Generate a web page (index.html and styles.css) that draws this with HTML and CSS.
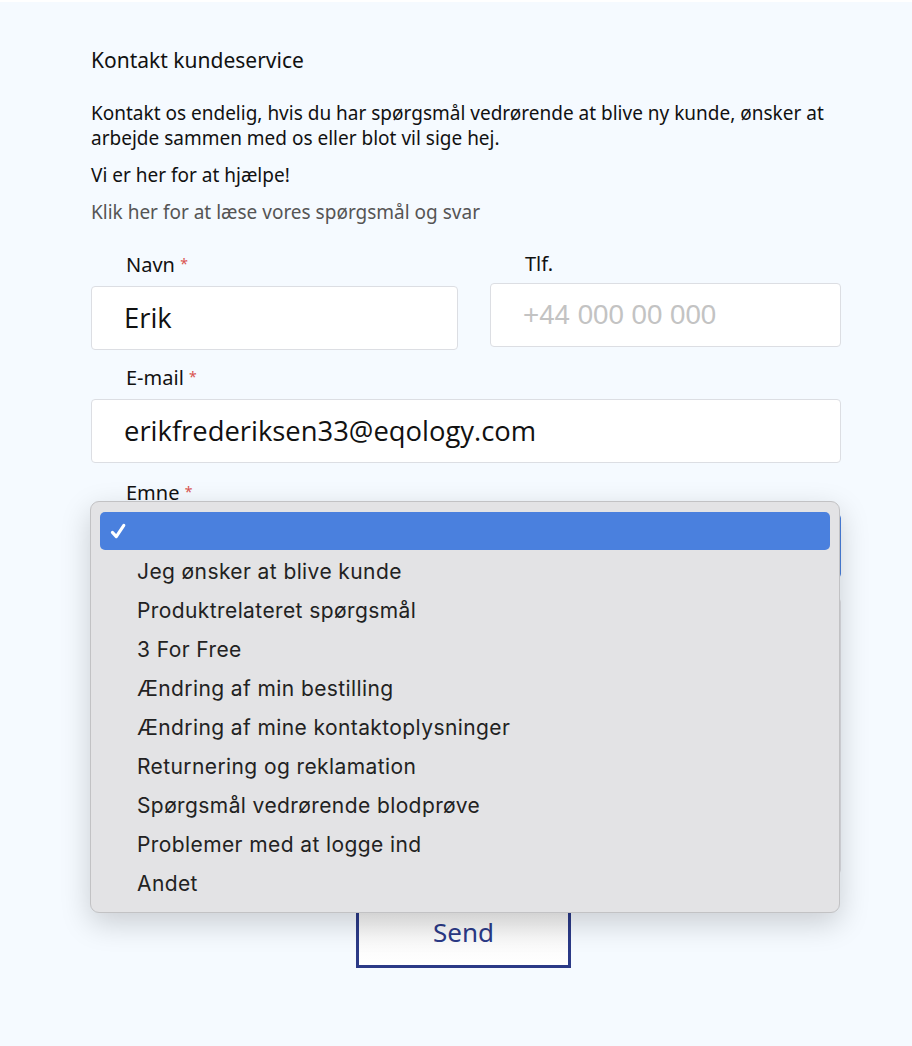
FILE: index.html
```html
<!DOCTYPE html>
<html lang="da">
<head>
<meta charset="utf-8">
<title>Kontakt kundeservice</title>
<link rel="stylesheet" href="styles.css">
</head>
<body>
<div class="page">
  <main class="content">
    <h1 class="title">Kontakt kundeservice</h1>
    <p class="lead">Kontakt os endelig, hvis du har spørgsmål vedrørende at blive ny kunde, ønsker at arbejde sammen med os eller blot vil sige hej.</p>
    <p class="lead">Vi er her for at hjælpe!</p>
    <p class="faq">Klik her for at læse vores spørgsmål og svar</p>

    <form class="form">
      <div class="row">
        <div class="field field-name">
          <label class="label">Navn <span class="req">*</span></label>
          <div class="input">Erik</div>
        </div>
        <div class="field field-phone">
          <label class="label label-phone">Tlf.</label>
          <div class="input placeholder">+44 000 00 000</div>
        </div>
      </div>
      <div class="field field-email">
        <label class="label">E-mail <span class="req">*</span></label>
        <div class="input">erikfrederiksen33@eqology.com</div>
      </div>
      <div class="field field-subject">
        <label class="label">Emne <span class="req">*</span></label>
        <div class="select"></div>
        <div class="menu">
          <div class="option selected">
            <svg class="check" width="16" height="18" viewBox="0 0 16 18"><path d="M2.4 10.4 L6.3 14.6 L13.8 3.4" fill="none" stroke="#fff" stroke-width="3.1" stroke-linecap="round" stroke-linejoin="round"/></svg>
          </div>
          <div class="option">Jeg ønsker at blive kunde</div>
          <div class="option">Produktrelateret spørgsmål</div>
          <div class="option">3 For Free</div>
          <div class="option">Ændring af min bestilling</div>
          <div class="option">Ændring af mine kontaktoplysninger</div>
          <div class="option">Returnering og reklamation</div>
          <div class="option">Spørgsmål vedrørende blodprøve</div>
          <div class="option">Problemer med at logge ind</div>
          <div class="option">Andet</div>
        </div>
      </div>
      <div class="field field-message">
        <div class="textarea"></div>
      </div>
      <div class="actions">
        <button type="button" class="send">Send</button>
      </div>
    </form>
  </main>
</div>
</body>
</html>
```

FILE: styles.css
```css
* { box-sizing: border-box; }
html, body { margin: 0; padding: 0; }
body {
  background: #f5faff;
  font-family: "Noto Sans", Lato, sans-serif;
  color: #111;
}
.page {
  border-top: 2px solid #ffffff;
  min-height: 1046px;
}
.content {
  width: 750px;
  margin-left: 91px;
  padding-top: 46px;
}
.title {
  margin: 0 0 29px;
  font-size: 21px;
  font-weight: 400;
  line-height: 24px;
}
.lead {
  margin: 0 0 12px;
  font-size: 19px;
  line-height: 25px;
}
.faq {
  margin: 0;
  font-size: 19px;
  line-height: 25px;
  color: #555;
}
.form {
  margin-top: 28px;
}
.row {
  display: flex;
  gap: 32px;
  align-items: flex-start;
}
.field-name { width: 367px; }
.field-phone { flex: 1; }
.label {
  display: block;
  padding-left: 35px;
  font-size: 20px;
  line-height: 22px;
  margin-bottom: 10px;
  color: #111;
}
.label-phone { margin-bottom: 8px; }
.req {
  color: #d9534f;
  font-size: 14px;
  vertical-align: 3px;
}
.input {
  height: 64px;
  background: #fff;
  border: 1px solid #dcdee3;
  border-radius: 4px;
  padding-left: 32px;
  font-family: "Open Sans", sans-serif;
  font-size: 27.4px;
  line-height: 62px;
  color: #111;
}
.placeholder {
  font-family: "Liberation Sans", Arial, sans-serif;
  font-size: 27.7px;
  color: #c3c3c3;
}
.field-email { margin-top: 16px; }
.field-subject { margin-top: 18px; position: relative; }
.select {
  height: 64px;
  background: #fff;
  border: 1px solid #4a80de;
  border-radius: 4px;
}
.menu {
  position: absolute;
  left: -1px;
  top: 20px;
  width: 750px;
  height: 412px;
  background: #e3e3e5;
  border: 1px solid #c2c2c4;
  border-radius: 9px;
  padding: 10px 9px;
  box-shadow: 0 10px 30px rgba(0, 0, 0, 0.18);
  font-family: Inter, Roboto, sans-serif;
  font-size: 21px;
  letter-spacing: 0.4px;
  color: #222;
  z-index: 2;
}
.option {
  height: 39px;
  line-height: 40px;
  padding-left: 37px;
}
.option.selected {
  height: 38px;
  margin-bottom: 2px;
  background: #4a80de;
  border-radius: 5px;
  padding-left: 10px;
  display: flex;
  align-items: center;
}
.check { display: block; }
.field-message { margin-top: 20px; }
.textarea {
  height: 276px;
  background: #fff;
  border: 1px solid #dcdee3;
  border-radius: 4px;
}
.actions {
  display: flex;
  justify-content: flex-start;
  padding-left: 265px;
  margin-top: 24px;
}
.send {
  width: 215px;
  height: 70px;
  background: linear-gradient(#f2f2f2, #ffffff);
  border: 3px solid #2b3a87;
  font-family: "Noto Sans", Lato, sans-serif;
  font-size: 26px;
  color: #2b3a87;
  padding: 0 0 2px;
}
```
